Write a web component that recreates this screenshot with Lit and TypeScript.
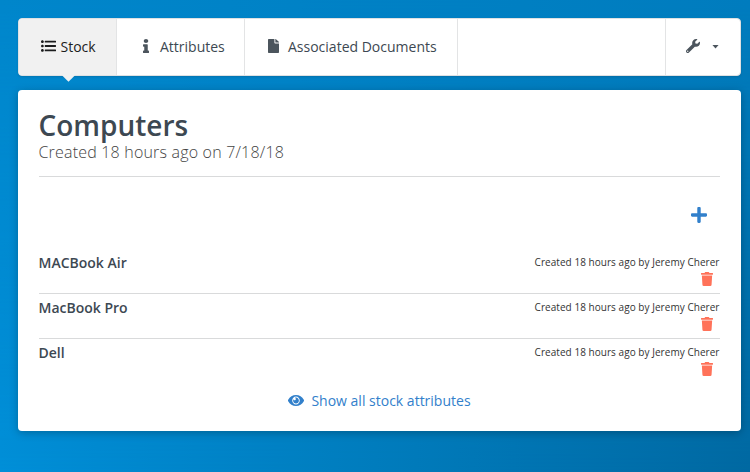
import { LitElement, html, css, svg } from "lit";
import { customElement } from "lit/decorators.js";

const ICONS = {
  list: { box: "0 0 512 512", d: "M96 96c0 26.51-21.49 48-48 48S0 122.51 0 96s21.49-48 48-48 48 21.49 48 48zM48 208c-26.51 0-48 21.49-48 48s21.49 48 48 48 48-21.49 48-48-21.49-48-48-48zm0 160c-26.51 0-48 21.49-48 48s21.49 48 48 48 48-21.49 48-48-21.49-48-48-48zm96-236h352c8.837 0 16-7.163 16-16V76c0-8.837-7.163-16-16-16H144c-8.837 0-16 7.163-16 16v40c0 8.837 7.163 16 16 16zm0 160h352c8.837 0 16-7.163 16-16v-40c0-8.837-7.163-16-16-16H144c-8.837 0-16 7.163-16 16v40c0 8.837 7.163 16 16 16zm0 160h352c8.837 0 16-7.163 16-16v-40c0-8.837-7.163-16-16-16H144c-8.837 0-16 7.163-16 16v40c0 8.837 7.163 16 16 16z" },
  info: { box: "0 0 192 512", d: "M20 424.229h20V279.771H20c-11.046 0-20-8.954-20-20V212c0-11.046 8.954-20 20-20h112c11.046 0 20 8.954 20 20v212.229h20c11.046 0 20 8.954 20 20V492c0 11.046-8.954 20-20 20H20c-11.046 0-20-8.954-20-20v-47.771c0-11.046 8.954-20 20-20zM96 0C56.235 0 24 32.235 24 72s32.235 72 72 72 72-32.235 72-72S135.764 0 96 0z" },
  file: { box: "0 0 384 512", d: "M224 136V0H24C10.7 0 0 10.7 0 24v464c0 13.3 10.7 24 24 24h336c13.3 0 24-10.7 24-24V160H248c-13.2 0-24-10.8-24-24zm160-14.1v6.1H256V0h6.1c6.4 0 12.5 2.5 17 7l97.9 98c4.5 4.5 7 10.6 7 16.9z" },
  wrench: { box: "0 0 512 512", d: "M507.73 109.1c-2.24-9.03-13.54-12.09-20.12-5.51l-74.36 74.36-67.88-11.31-11.31-67.88 74.36-74.36c6.62-6.62 3.43-17.9-5.66-20.16-47.38-11.74-99.55.91-136.58 37.93-39.64 39.64-50.55 97.1-34.05 147.2L18.74 402.76c-24.99 24.99-24.99 65.51 0 90.5 24.99 24.99 65.51 24.99 90.5 0l213.21-213.21c50.12 16.71 107.47 5.68 147.37-34.22 37.07-37.07 49.7-89.32 37.91-136.73zM64 472c-13.25 0-24-10.75-24-24 0-13.26 10.75-24 24-24s24 10.74 24 24c0 13.25-10.75 24-24 24z" },
  plus: { box: "0 32 448 448", d: "M416 208H272V64c0-17.67-14.33-32-32-32h-32c-17.67 0-32 14.33-32 32v144H32c-17.67 0-32 14.33-32 32v32c0 17.67 14.33 32 32 32h144v144c0 17.67 14.33 32 32 32h32c17.67 0 32-14.33 32-32V304h144c17.67 0 32-14.33 32-32v-32c0-17.67-14.33-32-32-32z" },
  trash: { box: "0 0 448 512", d: "M432 32H312l-9.4-18.7A24 24 0 0 0 281.1 0H166.8a23.72 23.72 0 0 0-21.4 13.3L136 32H16A16 16 0 0 0 0 48v32a16 16 0 0 0 16 16h416a16 16 0 0 0 16-16V48a16 16 0 0 0-16-16zM53.2 467a48 48 0 0 0 47.9 45h245.8a48 48 0 0 0 47.9-45L416 128H32z" },
  eye: { box: "0 72 576 368", d: "M569.354 231.631C512.969 135.949 407.81 72 288 72 168.14 72 63.004 135.994 6.646 231.631a47.999 47.999 0 0 0 0 48.739C63.031 376.051 168.19 440 288 440c119.86 0 224.996-63.994 281.354-159.631a47.997 47.997 0 0 0 0-48.738zM288 392c-75.162 0-136-60.827-136-136 0-75.162 60.826-136 136-136 75.162 0 136 60.826 136 136 0 75.162-60.826 136-136 136zm104-136c0 57.438-46.562 104-104 104s-104-46.562-104-104c0-17.708 4.431-34.379 12.236-48.973l-.001.032c0 23.651 19.173 42.823 42.824 42.823s42.824-19.173 42.824-42.823c0-23.651-19.173-42.824-42.824-42.824l-.032.001C253.621 156.431 270.292 152 288 152c57.438 0 104 46.562 104 104z" },
};

const icon = (name: keyof typeof ICONS) => html`<svg class="icon ${name}" viewBox=${ICONS[name].box} preserveAspectRatio="none" aria-hidden="true">${svg`<path d=${ICONS[name].d}></path>`}</svg>`;

@customElement("app-root")
export class AppRoot extends LitElement {
  static styles = css`
    :host {
      display: block;
      position: relative;
      box-sizing: border-box;
      width: 750px;
      height: 472px;
      padding: 18px 9px 0 18px;
      overflow: hidden;
      background: linear-gradient(to right, #008fd8, #0069a2);
      font-family: "Open Sans", "Noto Sans", sans-serif;
      color: #3d4852;
    }
    :host::before {
      content: "";
      position: absolute;
      inset: 0;
      background: linear-gradient(to right, #0086cb, #007cbe);
      -webkit-mask-image: linear-gradient(#000, transparent);
      mask-image: linear-gradient(#000, transparent);
    }
    .icon { display: block; fill: currentColor; flex: none; }
    .list { width: 15px; height: 14px; margin-right: 5px; }
    .info { width: 6px; height: 14px; margin: 0 11px 0 1px; }
    .file { width: 11px; height: 14px; margin: 0 9px 0 0; }
    .wrench { width: 14px; height: 14px; }
    .plus { width: 16px; height: 16px; }
    .trash { width: 12px; height: 14px; }
    .eye { width: 16px; height: 11px; }

    .tabs {
      position: relative;
      display: flex;
      box-sizing: border-box;
      height: 58px;
      border: 1px solid #dfe1e3;
      border-radius: 4px;
      background: #fff;
      box-shadow: 0 1px 2px rgba(34, 36, 38, 0.15);
      font-size: 14px;
    }
    .tab {
      position: relative;
      display: flex;
      align-items: center;
      box-sizing: border-box;
      padding-bottom: 2px;
      border-right: 1px solid #e3e4e5;
      white-space: nowrap;
    }
    .tab .icon { color: #4c555d; }
    .stock { width: 98px; padding-left: 21.5px; background: #f1f1f1; color: #1b1c1d; border-radius: 3px 0 0 3px; }
    .tab .list { color: #1b1c1d; }
    .stock::after {
      content: "";
      position: absolute;
      left: 44.5px;
      bottom: -5px;
      width: 9px;
      height: 9px;
      background: #f1f1f1;
      transform: rotate(45deg);
    }
    .attributes { width: 128px; padding-left: 25px; }
    .documents { width: 213px; padding-left: 23px; }
    .tools {
      display: flex;
      align-items: center;
      gap: 12px;
      box-sizing: border-box;
      width: 75px;
      margin-left: auto;
      padding: 0 0 2px 20px;
      border-left: 1px solid #e3e4e5;
      color: #4c555d;
    }
    .caret { width: 7px; height: 4px; margin-top: 1px; background: currentColor; clip-path: polygon(0 0, 100% 0, 50% 100%); }

    .card {
      position: relative;
      box-sizing: border-box;
      height: 341px;
      margin-top: 14px;
      padding: 18px 21px 0;
      border-radius: 4px;
      background: #fff;
      box-shadow: 0 2px 8px rgba(0, 0, 0, 0.25);
    }
    .title { margin: 0 0 0 -0.5px; font-size: 28px; line-height: 34px; font-weight: 600; }
    .subtitle { margin-left: -0.5px; font-size: 16px; line-height: 20px; font-weight: 300; letter-spacing: 0.19px; color: #444; }
    .heading { height: 68px; border-bottom: 1px solid #d9dadb; }
    .add { display: flex; justify-content: flex-end; padding: 30px 13px 26px 0; color: #3280cb; }
    .row {
      display: flex;
      justify-content: space-between;
      box-sizing: border-box;
      height: 45px;
      padding-top: 4px;
      border-bottom: 1px solid #d9dadb;
    }
    .row:last-of-type { border-bottom-color: transparent; }
    .name { margin-left: -0.5px; font-size: 14px; line-height: 20px; font-weight: 600; }
    .meta { display: flex; flex-direction: column; align-items: flex-end; font-size: 10px; line-height: 19px; letter-spacing: 0.045px; color: #333; }
    .meta span { margin-right: 0.5px; }
    .meta .icon { margin-right: 7px; color: #ff7259; }
    .show { display: flex; align-items: center; justify-content: center; gap: 7px; height: 20px; margin-top: 6px; color: #3280cb; font-size: 14px; }
  `;

  private items = ["MACBook Air", "MacBook Pro", "Dell"];

  render() {
    return html`
      <nav class="tabs">
        <div class="tab stock">${icon("list")}<span>Stock</span></div>
        <div class="tab attributes">${icon("info")}<span>Attributes</span></div>
        <div class="tab documents">${icon("file")}<span>Associated Documents</span></div>
        <div class="tools">${icon("wrench")}<span class="caret"></span></div>
      </nav>
      <main class="card">
        <header class="heading">
          <h1 class="title">Computers</h1>
          <div class="subtitle">Created 18 hours ago on 7/18/18</div>
        </header>
        <div class="add">${icon("plus")}</div>
        <section>
          ${this.items.map((name) => html`
            <div class="row">
              <div class="name">${name}</div>
              <div class="meta"><span>Created 18 hours ago by Jeremy Cherer</span>${icon("trash")}</div>
            </div>`)}
        </section>
        <div class="show">${icon("eye")}<span>Show all stock attributes</span></div>
      </main>
    `;
  }
}
